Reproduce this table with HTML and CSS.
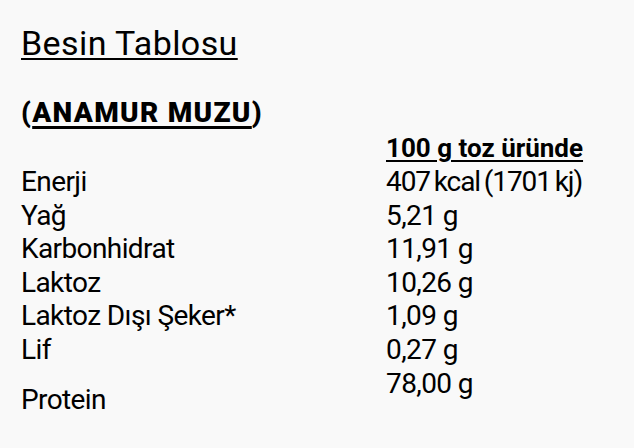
FILE: index.html
```html
<!DOCTYPE html>
<html lang="tr">
<head>
<meta charset="utf-8">
<link rel="stylesheet" href="styles.css">
</head>
<body>
<div class="page">
  <h2 class="title">Besin Tablosu</h2>
  <h3 class="product">(<span class="u">ANAMUR MUZU</span>)</h3>
  <table class="nutri">
    <tr class="head"><td></td><td><span class="u">100 g toz üründe</span></td></tr>
    <tr><td>Enerji</td><td class="energy">407 kcal (1701 kj)</td></tr>
    <tr><td>Yağ</td><td>5,21 g</td></tr>
    <tr><td>Karbonhidrat</td><td>11,91 g</td></tr>
    <tr><td>Laktoz</td><td>10,26 g</td></tr>
    <tr><td>Laktoz Dışı Şeker*</td><td>1,09 g</td></tr>
    <tr><td>Lif</td><td>0,27 g</td></tr>
    <tr class="last"><td>Protein</td><td>78,00 g</td></tr>
  </table>
</div>
</body>
</html>
```
FILE: styles.css
```css
html, body {
  margin: 0;
  padding: 0;
  background: #f9f9f9;
}
body {
  font-family: Roboto, "Liberation Sans", sans-serif;
  color: #000;
}
.page {
  padding: 23px 0 0 21px;
}
.title {
  margin: 0;
  font-size: 34px;
  font-weight: 400;
  line-height: 40px;
  letter-spacing: 0.4px;
  text-decoration: underline;
  text-decoration-thickness: 2px;
  text-underline-offset: 3px;
}
.product {
  margin: 33px 0 0 0;
  font-size: 28px;
  font-weight: 900;
  line-height: 34px;
  letter-spacing: 1.3px;
}
.product .u {
  text-decoration-thickness: 3px;
  text-underline-offset: 4px;
}
.u {
  text-decoration: underline;
  text-decoration-thickness: 2px;
  text-underline-offset: 3px;
}
.nutri {
  border-collapse: collapse;
  margin-top: 2px;
  font-size: 28px;
  letter-spacing: -0.6px;
}
.nutri td {
  padding: 0;
  line-height: 33.6px;
  vertical-align: top;
}
.nutri td:first-child {
  width: 365px;
}
.nutri .energy {
  word-spacing: -2px;
  letter-spacing: -1.1px;
}
.head td {
  font-size: 26px;
  font-weight: 700;
  line-height: 33px;
  letter-spacing: 0;
}
.last td:first-child {
  padding-top: 16px;
}
```
